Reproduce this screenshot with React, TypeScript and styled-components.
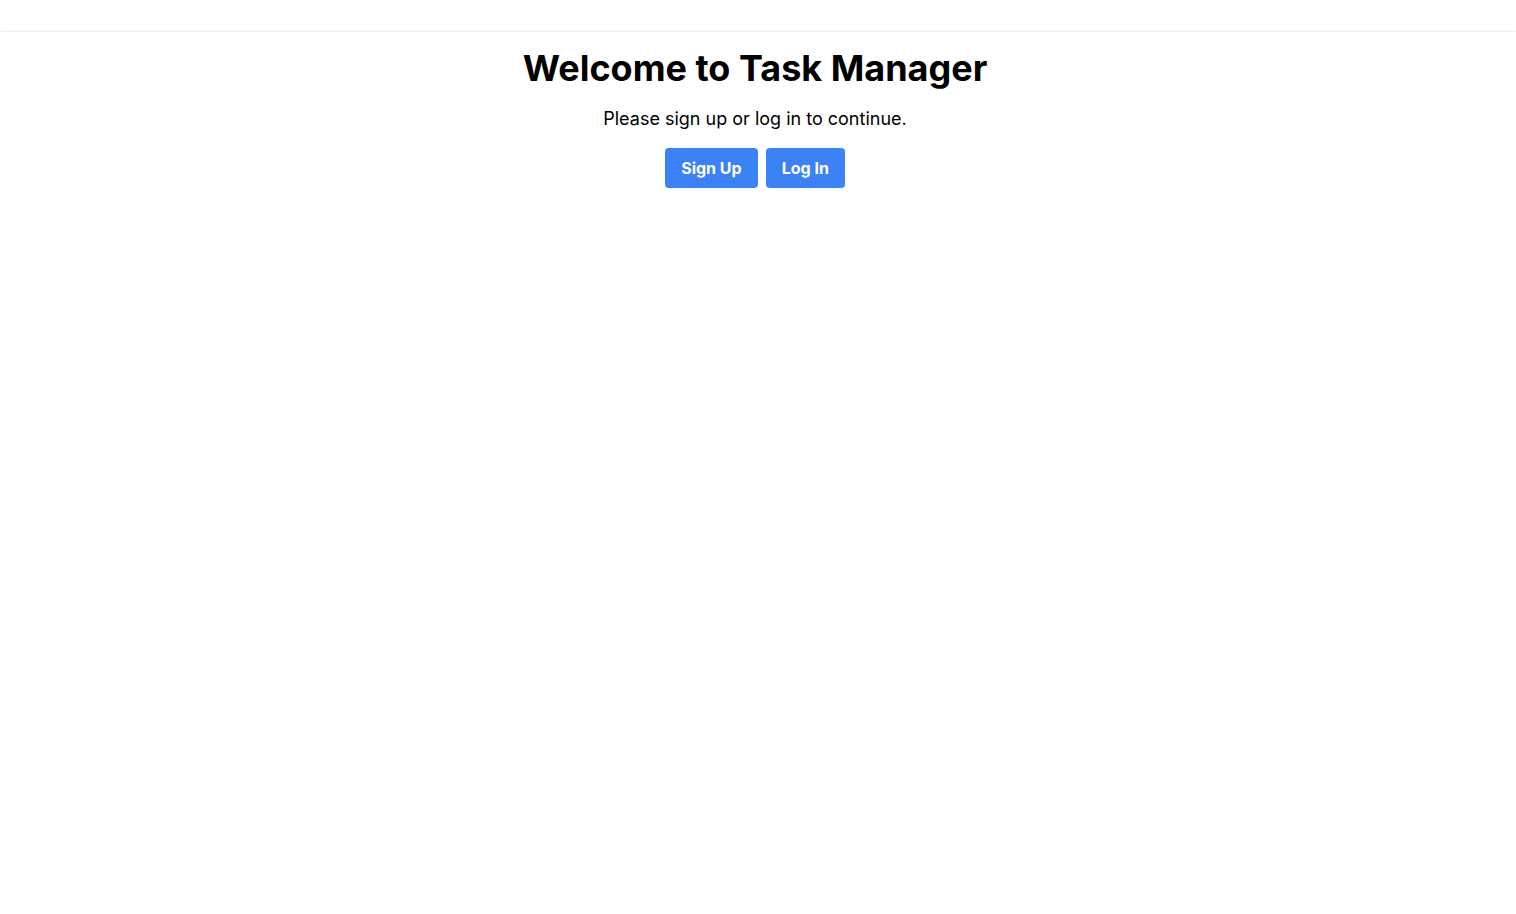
import React from "react";
import styled, { createGlobalStyle } from "styled-components";

const GlobalStyle = createGlobalStyle`
  html, body { margin: 0; padding: 0; background: #ffffff; }
  body { font-family: Inter, "Noto Sans", sans-serif; color: #000; }
  * { box-sizing: border-box; }
`;

const Page = styled.div`
  padding-top: 32px;
`;

const Hero = styled.section`
  display: flex;
  flex-direction: column;
  align-items: center;
  text-align: center;
  padding: 16px 22px 16px 16px;
  background: #fff;
  box-shadow: 0 0 2px rgba(0, 0, 0, 0.16), 0 2px 3px rgba(0, 0, 0, 0.16);
`;

const Title = styled.h1`
  margin: 0 0 17px;
  font-size: 36px;
  line-height: 40px;
  font-weight: 700;
`;

const Lead = styled.p`
  margin: 0 0 15px;
  font-size: 18px;
  line-height: 28px;
`;

const Actions = styled.div`
  display: flex;
  gap: 8px;
`;

const Button = styled.button`
  font-family: inherit;
  font-size: 16px;
  line-height: 24px;
  font-weight: 700;
  color: #fff;
  background: #3b82f6;
  border: none;
  border-radius: 4px;
  padding: 8px 16px;
  cursor: pointer;
`;

export default function App() {
  return (
    <>
      <GlobalStyle />
      <Page>
        <Hero>
          <Title>Welcome to Task Manager</Title>
          <Lead>Please sign up or log in to continue.</Lead>
          <Actions>
            <Button>Sign Up</Button>
            <Button>Log In</Button>
          </Actions>
        </Hero>
      </Page>
    </>
  );
}
